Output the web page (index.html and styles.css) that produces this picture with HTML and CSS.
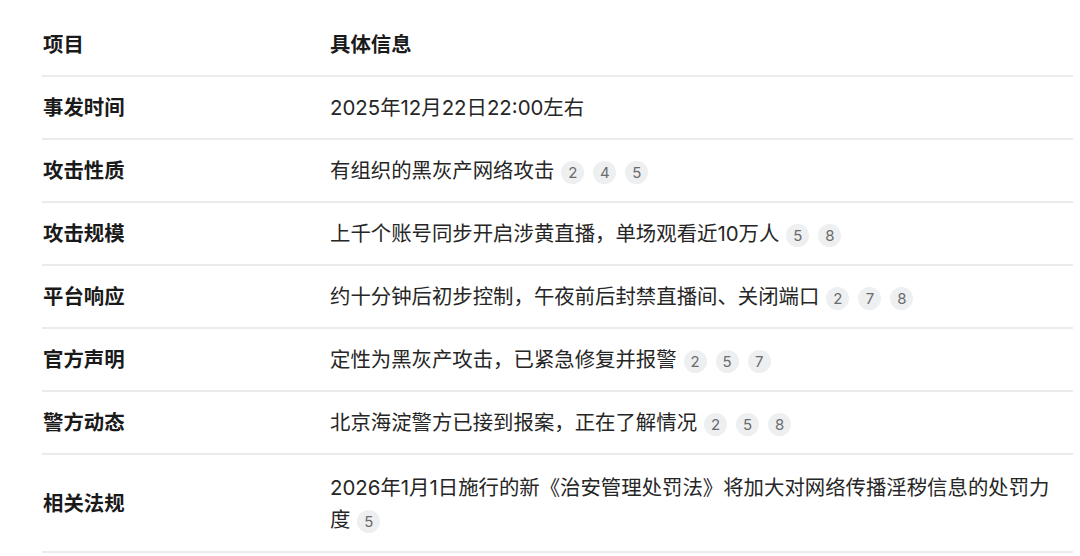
FILE: index.html
```html
<!DOCTYPE html>
<html lang="zh-CN">
<head>
<meta charset="utf-8">
<link rel="stylesheet" href="styles.css">
</head>
<body>
<table class="info">
  <thead>
    <tr><th class="c1">项目</th><th class="c2">具体信息</th></tr>
  </thead>
  <tbody>
    <tr><td class="c1">事发时间</td><td class="c2">2025年12月22日22:00左右</td></tr>
    <tr><td class="c1">攻击性质</td><td class="c2">有组织的黑灰产网络攻击<span class="refs"><span class="ref">2</span><span class="ref">4</span><span class="ref">5</span></span></td></tr>
    <tr><td class="c1">攻击规模</td><td class="c2">上千个账号同步开启涉黄直播，单场观看近10万人<span class="refs"><span class="ref">5</span><span class="ref">8</span></span></td></tr>
    <tr><td class="c1">平台响应</td><td class="c2">约十分钟后初步控制，午夜前后封禁直播间、关闭端口<span class="refs"><span class="ref">2</span><span class="ref">7</span><span class="ref">8</span></span></td></tr>
    <tr><td class="c1">官方声明</td><td class="c2">定性为黑灰产攻击，已紧急修复并报警<span class="refs"><span class="ref">2</span><span class="ref">5</span><span class="ref">7</span></span></td></tr>
    <tr><td class="c1">警方动态</td><td class="c2">北京海淀警方已接到报案，正在了解情况<span class="refs"><span class="ref">2</span><span class="ref">5</span><span class="ref">8</span></span></td></tr>
    <tr class="tall"><td class="c1">相关法规</td><td class="c2">2026年1月1日施行的新《治安管理处罚法》将加大对网络传播淫秽信息的处罚力度<span class="refs"><span class="ref">5</span></span></td></tr>
  </tbody>
</table>
</body>
</html>
```
FILE: styles.css
```css
html, body {
  margin: 0;
  padding: 0;
  background: #ffffff;
}
body {
  padding: 14px 7px 0 42px;
  font-family: Inter, "Noto Sans CJK SC", sans-serif;
  color: #1f1f1f;
}
.info {
  width: 1031px;
  border-collapse: collapse;
  font-size: 20.4px;
  line-height: 32px;
}
.info th,
.info td {
  text-align: left;
  vertical-align: middle;
  padding: 15px 0 14px 0;
  border-bottom: 2px solid #ebebeb;
}
.info tr.tall td {
  padding-top: 17px;
  padding-bottom: 15px;
}
.info th {
  font-weight: 700;
  color: #1a1a1a;
}
.info td.c1 {
  font-weight: 700;
  color: #1a1a1a;
}
.c1 {
  width: 287px;
  padding-left: 1px !important;
}
.c2 {
  padding-right: 14px !important;
  color: #262626;
}
.refs {
  display: inline-flex;
  gap: 9px;
  margin-left: 7px;
  vertical-align: 0;
}
.ref {
  display: inline-flex;
  align-items: center;
  justify-content: center;
  width: 23px;
  height: 23px;
  border-radius: 50%;
  background: #eeeff1;
  color: #6b6b6b;
  font-family: Inter, "Liberation Sans", sans-serif;
  font-size: 15px;
  line-height: 1;
}
```
